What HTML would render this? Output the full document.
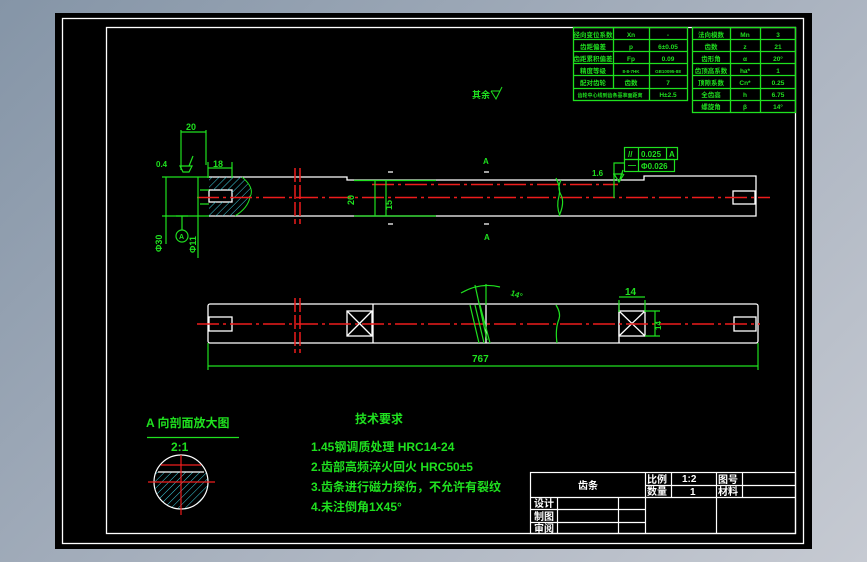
<!DOCTYPE html>
<html><head><meta charset="utf-8"><style>
html,body{margin:0;padding:0;width:867px;height:562px;overflow:hidden;background:linear-gradient(135deg,#8595a7 0%,#a9b2bf 55%,#c6cad2 100%);}
svg{position:absolute;left:0;top:0}
text{font-family:"Liberation Sans","Noto Sans CJK SC",sans-serif;font-weight:bold}
</style></head><body>
<svg width="867" height="562" viewBox="0 0 867 562" xmlns="http://www.w3.org/2000/svg">
<defs>
<pattern id="h" width="5" height="5" patternUnits="userSpaceOnUse" patternTransform="rotate(45)"><line x1="0" y1="0" x2="0" y2="5" stroke="#3fd0e0" stroke-width="1"/></pattern>
<clipPath id="cc"><circle cx="181" cy="482" r="27"/></clipPath>
</defs>
<rect x="55" y="13" width="757" height="536" fill="#000"/>
<rect x="62.5" y="18.5" width="741" height="525" fill="none" stroke="#fff" stroke-width="1.3"/>
<rect x="106.5" y="27.5" width="689" height="506" fill="none" stroke="#fff" stroke-width="1.3"/>

<!-- parameter tables -->
<g stroke="#1fe01f" stroke-width="1.3" fill="none">
<rect x="573.5" y="27.5" width="114" height="73"/>
<line x1="573" y1="39.5" x2="688" y2="39.5"/><line x1="573" y1="51.5" x2="688" y2="51.5"/><line x1="573" y1="63.5" x2="688" y2="63.5"/><line x1="573" y1="75.5" x2="688" y2="75.5"/><line x1="573" y1="88.5" x2="688" y2="88.5"/>
<line x1="613.5" y1="27" x2="613.5" y2="88"/><line x1="649.5" y1="27" x2="649.5" y2="101"/>
<rect x="692.5" y="27.5" width="103" height="85"/>
<line x1="692" y1="39.5" x2="796" y2="39.5"/><line x1="692" y1="51.5" x2="796" y2="51.5"/><line x1="692" y1="63.5" x2="796" y2="63.5"/><line x1="692" y1="75.5" x2="796" y2="75.5"/><line x1="692" y1="88.5" x2="796" y2="88.5"/><line x1="692" y1="100.5" x2="796" y2="100.5"/>
<line x1="730.5" y1="27" x2="730.5" y2="112"/><line x1="760.5" y1="27" x2="760.5" y2="112"/>
</g>
<g fill="#1fe01f" font-size="6.5" text-anchor="middle">
<text x="593" y="37">径向变位系数</text><text x="631" y="37">Xn</text><text x="668" y="37">-</text>
<text x="593" y="49">齿距偏差</text><text x="631" y="49">p</text><text x="668" y="49">6±0.05</text>
<text x="593" y="61">齿距累积偏差</text><text x="631" y="61">Fp</text><text x="668" y="61">0.09</text>
<text x="593" y="73">精度等级</text><text x="631" y="73" font-size="4.5">8-8-7HK</text><text x="668" y="73" font-size="4.5">GB10095-88</text>
<text x="593" y="85">配对齿轮</text><text x="631" y="85">齿数</text><text x="668" y="85">7</text>
<text x="610" y="97" font-size="5">齿轮中心线到齿条基准面距离</text><text x="668" y="97">H±2.5</text>
<text x="711" y="37">法向模数</text><text x="745" y="37">Mn</text><text x="778" y="37">3</text>
<text x="711" y="49">齿数</text><text x="745" y="49">z</text><text x="778" y="49">21</text>
<text x="711" y="61">齿形角</text><text x="745" y="61">α</text><text x="778" y="61">20°</text>
<text x="711" y="73">齿顶高系数</text><text x="745" y="73">ha*</text><text x="778" y="73">1</text>
<text x="711" y="85">顶隙系数</text><text x="745" y="85">Cn*</text><text x="778" y="85">0.25</text>
<text x="711" y="97">全齿高</text><text x="745" y="97">h</text><text x="778" y="97">6.75</text>
<text x="711" y="109">螺旋角</text><text x="745" y="109">β</text><text x="778" y="109">14°</text>
</g>
<text x="472" y="98" fill="#1fe01f" font-size="9">其余</text>
<path d="M491 91 l5 8 l4 -8 l2 -4 M491 91 h9" stroke="#1fe01f" fill="none"/>

<!-- upper shaft -->
<g stroke="#fff" stroke-width="1.3" fill="none">
<path d="M209 177 H347 V180 H560 M560 180 H644 V176 H756 V216 H560 M560 216 H209 Z"/>
<rect x="209" y="190" width="23" height="12"/>
<rect x="733" y="191" width="22" height="13"/>
<path d="M388 172 h5 M388 224 h5 M484 172 h5 M484 224 h5"/>
</g>
<path d="M209 177 H242 Q255 188 250 197 Q248 208 235 216 H209 Z M209 190 h23 v12 h-23 z" fill="url(#h)" fill-rule="evenodd"/>
<path d="M242 177 Q255 188 250 197 Q248 208 235 216" stroke="#1fe01f" fill="none"/>
<g stroke="#ee1c1c" stroke-width="1.5" fill="none">
<line x1="197" y1="197.5" x2="770" y2="197.5" stroke-dasharray="22 4 3 4"/>
<line x1="372" y1="184.5" x2="618" y2="184.5" stroke-dasharray="22 4 3 4"/>
<line x1="295" y1="168" x2="295" y2="224" stroke-dasharray="14 3"/><line x1="300" y1="168" x2="300" y2="224" stroke-dasharray="14 3"/>
</g>
<g stroke="#1fe01f" stroke-width="1.2" fill="none">
<path d="M561 180 q-4 8 0 15 q4 8 -2 21 M556 178 q5 10 3 18 q-3 10 1 20"/>
<path d="M354 180.5 H436 M354 216 H436 M386 180 V216 M375 180 V216"/>
<path d="M181 130 V170 M206 130 V165 M181 132 H206"/>
<path d="M208 168 H232 M208 162 V178 M232 162 V178"/>
<path d="M162 177 H209 M162 216 H209 M166 177 V244 M200 190 H209 M200 204 H209 M198 177 V258"/>
<circle cx="182" cy="236" r="6"/><path d="M182 216 V230 M176 216 H188"/>
<path d="M183 172 l-3 -6 h12 l-3 6 z M189 166 l4 -10"/>
<path d="M614 174 l5 8 l5 -8 M619 182 l4 -12 M613 174 h10"/>
<path d="M614 193 V163 H624 M614 187 V198"/>
<rect x="624.5" y="147.5" width="53" height="12"/><rect x="624.5" y="159.5" width="50" height="12"/>
<line x1="638.5" y1="147" x2="638.5" y2="172"/><line x1="666.5" y1="147" x2="666.5" y2="160"/>
</g>
<g fill="#1fe01f" font-size="9">
<text x="186" y="130">20</text><text x="213" y="167">18</text>
<text x="156" y="167" font-size="8">0.4</text>
<text x="592" y="176" font-size="8">1.6</text>
<text x="641" y="157" font-size="8">0.025</text><text x="669" y="157" font-size="8">A</text>
<text x="641" y="169" font-size="8">Φ0.026</text>
<text x="628" y="157" font-size="8">//</text><text x="628" y="168" font-size="8">—</text>
<text x="483" y="164" font-size="8">A</text><text x="484" y="240" font-size="8">A</text>
<text x="179" y="239" font-size="7">A</text>
<text transform="translate(162,252) rotate(-90)" font-size="9">Φ30</text>
<text transform="translate(196,253) rotate(-90)" font-size="9">Φ11</text>
<text transform="translate(354,205) rotate(-90)" font-size="9">20</text>
<text transform="translate(392,210) rotate(-90)" font-size="9">15</text>
</g>

<!-- lower shaft -->
<g stroke="#fff" stroke-width="1.3" fill="none">
<rect x="208" y="304" width="550" height="39" rx="2"/>
<rect x="209" y="317" width="23" height="14"/><rect x="734" y="317" width="22" height="14"/>
<rect x="347" y="311" width="25" height="25"/><path d="M347 311 L372 336 M372 311 L347 336 M373 304 V343"/>
<rect x="619" y="311" width="26" height="25"/><path d="M619 311 L645 336 M645 311 L619 336 M619 304 V343"/>
<line x1="486" y1="304" x2="486" y2="343"/>
</g>
<g stroke="#ee1c1c" stroke-width="1.5" fill="none">
<line x1="197" y1="324" x2="760" y2="324" stroke-dasharray="22 4 3 4"/>
<line x1="295" y1="298" x2="295" y2="353" stroke-dasharray="14 3"/><line x1="300" y1="298" x2="300" y2="353" stroke-dasharray="14 3"/>
</g>
<g stroke="#1fe01f" stroke-width="1.2" fill="none">
<path d="M470 305 L479 343 M475 305 L484 343 M480 305 L490 343 M475 285 L487 340 M486 284 V305"/>
<path d="M461 293 Q480 282 500 287"/>
<path d="M556 305 q5 8 3 14 q-4 10 -2 24"/>
<path d="M208 343 V370 M758 343 V370 M208 366 H758"/>
<path d="M619 300 V312 M645 300 V312 M619 297 H645 M645 311 H660 M645 336 H660 M655 311 V336"/>
</g>
<g fill="#1fe01f" font-size="10">
<text x="472" y="362">767</text><text x="625" y="295">14</text>
<text x="510" y="295" font-size="8" transform="rotate(20 510 295)">14°</text>
<text transform="translate(661,330) rotate(-90)" font-size="8">14</text>
</g>

<!-- section view -->
<text x="146" y="427" fill="#1fe01f" font-size="12">A 向剖面放大图</text>
<line x1="147" y1="437.5" x2="239" y2="437.5" stroke="#1fe01f" stroke-width="1.2"/>
<text x="171" y="451" fill="#1fe01f" font-size="12">2:1</text>
<rect x="150" y="472" width="62" height="40" fill="url(#h)" clip-path="url(#cc)"/>
<circle cx="181" cy="482" r="27" fill="none" stroke="#fff" stroke-width="1.2"/>
<line x1="158" y1="472" x2="204" y2="472" stroke="#fff" stroke-width="1.2"/>
<g stroke="#ee1c1c" stroke-width="1.2"><line x1="148" y1="482" x2="215" y2="482"/><line x1="181" y1="455" x2="181" y2="515"/><line x1="161" y1="465" x2="201" y2="465"/></g>

<g fill="#1fe01f" font-size="12">
<text x="355" y="423">技术要求</text>
<text x="311" y="451">1.45钢调质处理 HRC14-24</text>
<text x="311" y="471">2.齿部高频淬火回火 HRC50±5</text>
<text x="311" y="491">3.齿条进行磁力探伤，不允许有裂纹</text>
<text x="311" y="511">4.未注倒角1X45°</text>
</g>

<!-- title block -->
<g stroke="#fff" stroke-width="1.2" fill="none">
<rect x="530.5" y="472.5" width="265" height="61"/>
<line x1="530" y1="497.5" x2="796" y2="497.5"/>
<line x1="645.5" y1="472" x2="645.5" y2="534"/><line x1="716.5" y1="472" x2="716.5" y2="534"/>
<line x1="671.5" y1="472" x2="671.5" y2="497"/><line x1="742.5" y1="472" x2="742.5" y2="497"/>
<line x1="645" y1="485.5" x2="796" y2="485.5"/>
<line x1="530" y1="509.5" x2="645" y2="509.5"/><line x1="530" y1="522.5" x2="645" y2="522.5"/>
<line x1="557.5" y1="497" x2="557.5" y2="534"/><line x1="618.5" y1="497" x2="618.5" y2="534"/>
</g>
<g fill="#fff" font-size="10">
<text x="578" y="489">齿条</text>
<text x="647" y="483">比例</text><text x="682" y="482" font-weight="normal">1:2</text>
<text x="647" y="495">数量</text><text x="690" y="495" font-weight="normal">1</text>
<text x="718" y="483">图号</text><text x="718" y="495">材料</text>
<text x="534" y="507">设计</text><text x="534" y="520">制图</text><text x="534" y="532">审阅</text>
</g>
</svg>
</body></html>
